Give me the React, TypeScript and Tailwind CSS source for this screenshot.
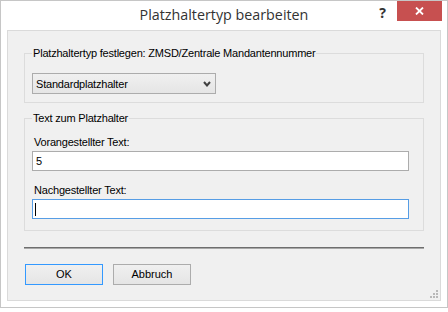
import React from 'react';

const ui = { fontFamily: '"Liberation Sans", Arial, sans-serif' };

function GroupBox({ title, className, children }: { title: string; className: string; children: React.ReactNode }) {
  return (
    <fieldset className={`ml-[16px] w-[400px] border border-[#dcdcdc] px-[7px] ${className}`}>
      <legend className="px-[1px] text-[11px] leading-[14px] tracking-[-0.2px] text-black">{title}</legend>
      {children}
    </fieldset>
  );
}

function Button({ label, focused }: { label: string; focused?: boolean }) {
  return (
    <button
      className={`h-[21px] w-[78px] border bg-gradient-to-b from-[#f0f0f0] to-[#e5e5e5] text-[11px] leading-[19px] text-black ${
        focused ? 'border-[#3399ff]' : 'border-[#acacac]'
      }`}
    >
      {label}
    </button>
  );
}

export default function App() {
  return (
    <div className="min-h-screen bg-white" style={ui}>
      <div className="flex h-[308px] w-[448px] flex-col border border-[#c6c6c6] bg-white">
        {/* title bar */}
        <div className="relative flex h-[29px] items-start">
          <div
            className="absolute left-0 right-0 top-[4px] text-center text-[14.3px] leading-[20px] text-[#333333]"
            style={{ fontFamily: '"Open Sans", "Noto Sans", sans-serif' }}
          >
            Platzhaltertyp bearbeiten
          </div>
          <div className="ml-auto flex items-start">
            <span className="mr-[11px] mt-[4px] text-[14px] font-bold leading-[16px] text-[#333333]" style={{ fontFamily: '"Noto Sans", sans-serif' }}>
              ?
            </span>
            <div className="mr-[5px] flex h-[20px] w-[45px] items-center justify-center bg-[#c75050]">
              <svg width="9" height="8" viewBox="0 0 9 8">
                <path d="M1 0.5 L8 7.5 M8 0.5 L1 7.5" stroke="#ffffff" strokeWidth="1.8" />
              </svg>
            </div>
          </div>
        </div>

        {/* client area */}
        <div className="relative mx-[6px] flex h-[271px] flex-col border border-[#dadada] bg-[#f0f0f0]">
          <GroupBox title="Platzhaltertyp festlegen: ZMSD/Zentrale Mandantennummer" className="mt-[15px] pb-[8px] pt-[13px]">
            <div className="flex h-[21px] w-[184px] items-center justify-between border border-[#acacac] bg-gradient-to-b from-[#f0f0f0] to-[#e5e5e5] pl-[3px] pr-[4px]">
              <span className="text-[11px] leading-[14px] tracking-[-0.2px] text-black">Standardplatzhalter</span>
              <svg width="8" height="6" viewBox="0 0 8 6">
                <path d="M1 1 L4 4.5 L7 1" fill="none" stroke="#404040" strokeWidth="2" />
              </svg>
            </div>
          </GroupBox>

          <GroupBox title="Text zum Platzhalter" className="mt-[8px] pb-[11px] pt-[10px]">
            <div className="pl-[2px] text-[11px] leading-[14px] tracking-[-0.2px] text-black">Vorangestellter Text:</div>
            <div className="mt-[2px] flex h-[20px] w-[377px] items-center border border-[#acacac] bg-white pl-[3px] text-[11px] text-black">
              5
            </div>
            <div className="mt-[12px] pl-[2px] text-[11px] leading-[14px] tracking-[-0.2px] text-black">Nachgestellter Text:</div>
            <div className="mt-[2px] flex h-[20px] w-[377px] items-center border border-[#569de5] bg-white pl-[2px]">
              <span className="h-[13px] w-[1px] bg-black" />
            </div>
          </GroupBox>

          <div className="ml-[16px] mt-[16px] w-[400px] border-b border-t border-b-[#a8a8a8] border-t-[#6e6e6e]" />

          <div className="ml-[17px] mt-[15px] flex gap-[10px]">
            <Button label="OK" focused />
            <Button label="Abbruch" />
          </div>

          <svg className="absolute bottom-[1px] right-[1px]" width="10" height="10" viewBox="0 0 10 10">
            <rect x="7" y="1" width="2" height="2" fill="#b8b8b8" />
            <rect x="4" y="4" width="2" height="2" fill="#b8b8b8" />
            <rect x="7" y="4" width="2" height="2" fill="#b8b8b8" />
            <rect x="1" y="7" width="2" height="2" fill="#b8b8b8" />
            <rect x="4" y="7" width="2" height="2" fill="#b8b8b8" />
            <rect x="7" y="7" width="2" height="2" fill="#b8b8b8" />
          </svg>
        </div>
      </div>
    </div>
  );
}
